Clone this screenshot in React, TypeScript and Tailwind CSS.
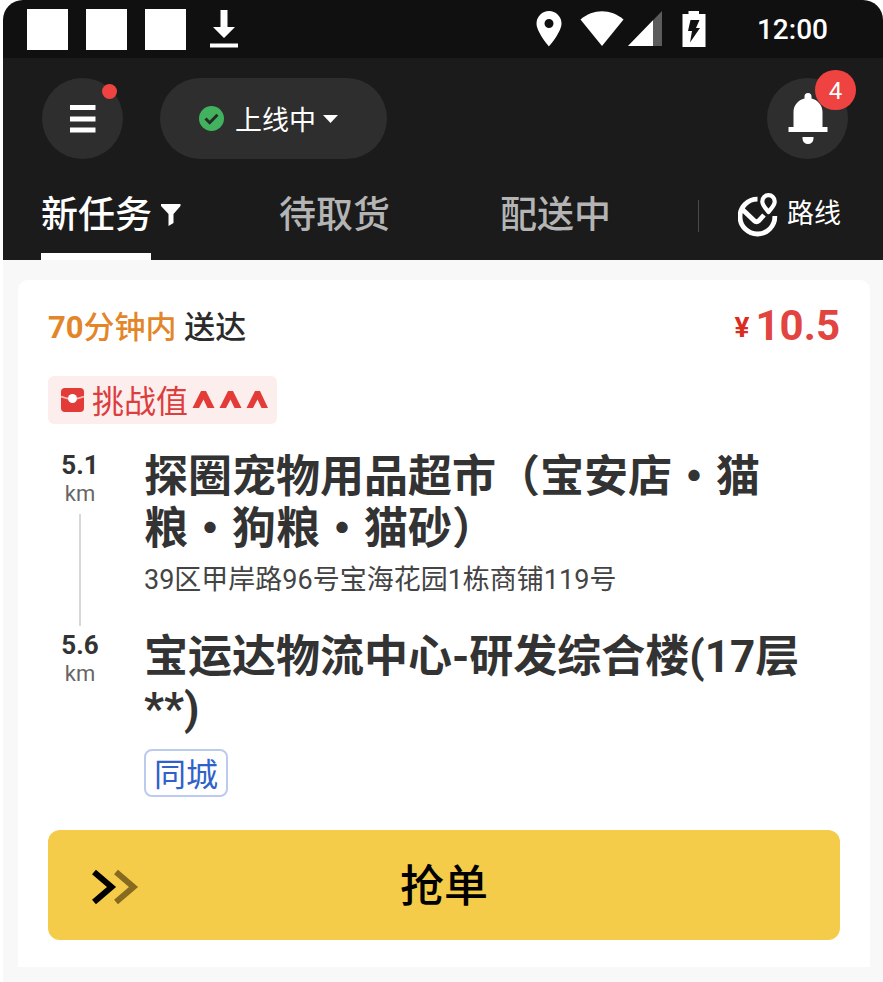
import type { ReactNode } from "react";

function StatusBar() {
  return (
    <div className="flex h-[58px] items-center justify-between bg-[#101010] pr-[55px] pl-6 text-white">
      <div className="flex items-center gap-[18px]">
        <span className="size-[41px] bg-white" />
        <span className="size-[41px] bg-white" />
        <span className="size-[41px] bg-white" />
        <svg className="ml-[6px] h-[38px] w-7" viewBox="0 0 28 38" fill="currentColor" aria-hidden="true">
          <path d="M10.500 0h7v17H25L14 28 3 17h7.500zM0 33.500h28v4H0z" />
        </svg>
      </div>
      <div className="flex items-center">
        <svg className="h-9 w-[26px]" viewBox="0 0 26 36" fill="currentColor" aria-hidden="true">
          <path fillRule="evenodd" d="M13 0a12.500 12.500 0 0 0-12.500 12.500C.5 21 13 35.500 13 35.500S25.500 21 25.500 12.500A12.500 12.500 0 0 0 13 0Zm0 8a4.500 4.500 0 1 1 0 9 4.500 4.500 0 0 1 0-9Z" />
        </svg>
        <svg className="ml-[18px] h-9 w-11" viewBox="0 0 44 36" fill="currentColor" aria-hidden="true">
          <path d="M.5 8.500C13-2.500 31-2.500 43.500 8.500L22 35Z" />
        </svg>
        <svg className="ml-1 h-9 w-[34px]" viewBox="0 0 34 36" fill="currentColor" aria-hidden="true">
          <path d="M34 0v35H0Z" fill="#5c5c5c" />
          <path d="M25 9.300V35H0Z" />
        </svg>
        <svg className="ml-5 h-9 w-6" viewBox="0 0 24 36" aria-hidden="true">
          <path d="M6.500 0h10.500v3h6.500v33H.5V3h6Z" fill="#fff" />
          <path d="M8.500 9h9l-3.500 8h4L8 31.500l2-11.500H6Z" fill="#101010" />
        </svg>
        <time className="ml-[51px] pt-[2px] text-[28px] leading-9 font-medium">12:00</time>
      </div>
    </div>
  );
}

function RouteIcon() {
  return (
    <svg className="h-11 w-10" viewBox="0 0 40 44" fill="none" stroke="currentColor" aria-hidden="true">
      <path d="M19.500 6.200A17.400 17.400 0 1 0 36.800 23" strokeWidth="4.800" />
      <path d="M4.500 16.500 16 27.500q2.500 2.500 5 0L26 22" strokeWidth="4.800" />
      <path d="M30.500 19c-2.500-3.500-6.200-6.500-6.200-10.600a6.200 6.200 0 0 1 12.400 0c0 4.100-3.700 7.100-6.200 10.600Z" strokeWidth="4.200" strokeLinejoin="round" />
    </svg>
  );
}

function Header() {
  return (
    <header className="bg-[#1b1b1b] pt-5 text-white">
      <div className="flex items-center pr-[35px] pl-[39px]">
        <button type="button" aria-label="菜单" className="relative flex size-[81px] items-center justify-center rounded-full bg-[#2e2e2e]">
          <svg className="h-7 w-[26px]" viewBox="0 0 26 28" fill="currentColor" aria-hidden="true">
            <path d="M0 0h25.500v5H0zM0 11.500h25.500v5H0zM0 22.500h25.500v5H0z" />
          </svg>
          <span className="absolute top-[6px] right-[6px] size-[15px] rounded-full bg-[#ee4340]" />
        </button>
        <label className="ml-[37px] flex h-[81px] w-[227px] items-center justify-center rounded-full bg-[#2e2e2e] pr-[10px]">
          <svg className="size-[25px]" viewBox="0 0 25 25" aria-hidden="true">
            <circle cx="12.500" cy="12.500" r="12.500" fill="#42b25f" />
            <path d="m6.500 12.500 4.200 4.200 7.800-8" fill="none" stroke="#222d25" strokeWidth="3" />
          </svg>
          <select aria-label="接单状态" className="ml-[11px] appearance-none bg-transparent pt-1 text-[27px] leading-9 text-white outline-none">
            <option>上线中</option>
          </select>
          <svg className="ml-[7px] h-2 w-[15px]" viewBox="0 0 15 8" fill="currentColor" aria-hidden="true">
            <path d="M0 0h15L7.500 8Z" />
          </svg>
        </label>
        <button type="button" aria-label="通知" className="relative ml-auto flex size-[81px] items-center justify-center rounded-full bg-[#2e2e2e]">
          <svg className="h-[52px] w-10" viewBox="0 0 40 52" fill="currentColor" aria-hidden="true">
            <path d="M16.500 5.500V3.500a3.500 3.500 0 0 1 7 0v2C30 7 34.500 12.500 34.500 19v15h5v5H.5v-5h5V19C5.500 12.500 10 7 16.500 5.500ZM14.500 44h11v1.500a5.500 5.500 0 0 1-11 0Z" />
          </svg>
          <span className="absolute -top-2 -right-2 flex h-10 w-[41px] items-center justify-center rounded-full bg-[#ee4340] pt-[2px] text-2xl">4</span>
        </button>
      </div>
      <div className="flex h-[101px] items-stretch pr-[42px] pl-[38px]">
        <nav className="grid flex-1 grid-cols-[238fr_221fr_198fr] text-[37px] leading-[56px] font-medium text-[#b4b4b4]">
          <a href="#new" className="relative flex items-start pt-[29px] text-white">
            新任务
            <svg className="mt-4 ml-[9px] h-[22px] w-5" viewBox="0 0 20 22" fill="currentColor" aria-hidden="true">
              <path d="M0 0h19.500v2L12.500 10v9L7.500 22V10L0 2Z" />
            </svg>
            <span className="absolute bottom-0 left-0 h-[7px] w-[110px] bg-white" />
          </a>
          <a href="#pickup" className="pt-[29px]">待取货</a>
          <a href="#delivering" className="pt-[29px]">配送中</a>
        </nav>
        <div className="mt-[41px] h-8 w-px bg-[#4a4a4a]" />
        <a href="#route" className="flex items-start gap-[9px] pt-[34px] pl-[39px]">
          <RouteIcon />
          <span className="text-[27px] leading-[42px]">路线</span>
        </a>
      </div>
    </header>
  );
}

function ChallengeTag() {
  return (
    <div className="mt-7 flex h-12 w-fit items-center rounded-md bg-[#fdeeee] pr-[9px] pl-[13px] text-[#dc3d3d]">
      <svg className="h-6 w-[23px]" viewBox="0 0 23 24" aria-hidden="true">
        <rect width="23" height="24" rx="4" fill="#e23b38" />
        <path d="M0 8.500q6 2.500 11.500 2.500T23 8.500" fill="none" stroke="#fbb9b5" strokeWidth="1.800" />
        <circle cx="11.500" cy="10.500" r="4.500" fill="#fff" />
      </svg>
      <span className="ml-2 pt-1 text-[32px] leading-[44px]">挑战值</span>
      <svg className="ml-1 h-[18px] w-[76px]" viewBox="0 0 76 18" fill="#e23b38" aria-hidden="true">
        <path d="M9 0h5l8.500 17h-7L11.500 8.500 7 17H.5ZM36 0h5l8.500 17h-7L38.500 8.500 34 17h-6.500ZM63 0h5l8 17h-6.500L65.500 8.500 61 17h-6.500Z" />
      </svg>
    </div>
  );
}

function Distance({ value, line }: { value: string; line?: boolean }) {
  return (
    <div className="flex w-16 shrink-0 flex-col items-center text-[#333]">
      <span className="text-[26px] leading-[30px] font-bold">{value}</span>
      <span className="text-[22px] leading-7 text-[#666]">km</span>
      {line && <span className="mt-[6px] mb-1 w-[2px] flex-1 bg-[#d8d8d8]" />}
    </div>
  );
}

function Stop({ value, line, title, children }: { value: string; line?: boolean; title: string; children: ReactNode }) {
  return (
    <li className="flex gap-8">
      <Distance value={value} line={line} />
      <div className="flex-1 pt-px">
        <h2 className="text-[44px] leading-[52px] font-bold text-[#333]">{title}</h2>
        {children}
      </div>
    </li>
  );
}

export default function App() {
  return (
    <div className="min-h-screen bg-white pl-[3px] font-[Roboto,'Noto_Sans_CJK_SC',sans-serif]">
      <div className="min-h-screen overflow-hidden rounded-t-[20px] bg-[#f8f8f8]">
        <StatusBar />
        <Header />
        <main className="pt-5 pr-[13px] pb-[15px] pl-[15px]">
          <article className="rounded-t-[10px] bg-white px-[30px] pt-7 pb-[27px]">
            <div className="flex h-10 items-center justify-between">
              <p className="text-[31px] leading-10 font-medium text-[#2b2b2b]">
                <span className="text-[#e3862a]"><b>70</b>分钟内</span> 送达
              </p>
              <p className="flex items-center gap-[6px] pb-1 leading-10 font-bold text-[#e2443f]">
                <span className="pt-1 text-[28px] text-[#dc2c22]">¥</span>
                <span className="text-[42px]">10.5</span>
              </p>
            </div>
            <ChallengeTag />
            <ul className="mt-[26px]">
              <Stop value="5.1" line title="探圈宠物用品超市（宝安店・猫粮・狗粮・猫砂）">
                <p className="mt-[5px] mb-[30px] text-[27px] leading-10 text-[#444]">39区甲岸路96号宝海花园1栋商铺119号</p>
              </Stop>
              <Stop value="5.6" title="宝运达物流中心-研发综合楼(17层**)">
                <span className="mt-[14px] flex h-12 w-fit items-center rounded-lg border-2 border-[#bccaee] px-2 pt-[3px] text-[32px] leading-10 text-[#2f62c8]">同城</span>
              </Stop>
            </ul>
            <button type="button" className="relative mt-[33px] h-[110px] w-full rounded-xl bg-[#f5cb4a] pt-1 text-[44px] font-medium text-black">
              <svg className="absolute top-[39px] left-[44px] h-[36px] w-[47px]" viewBox="0 0 47 36" fill="none" strokeWidth="6" aria-hidden="true">
                <path d="m24 3 17.500 15L24 33" stroke="#856a20" />
                <path d="m2 3 17.500 15L2 33" stroke="#000" />
              </svg>
              抢单
            </button>
          </article>
        </main>
      </div>
    </div>
  );
}
